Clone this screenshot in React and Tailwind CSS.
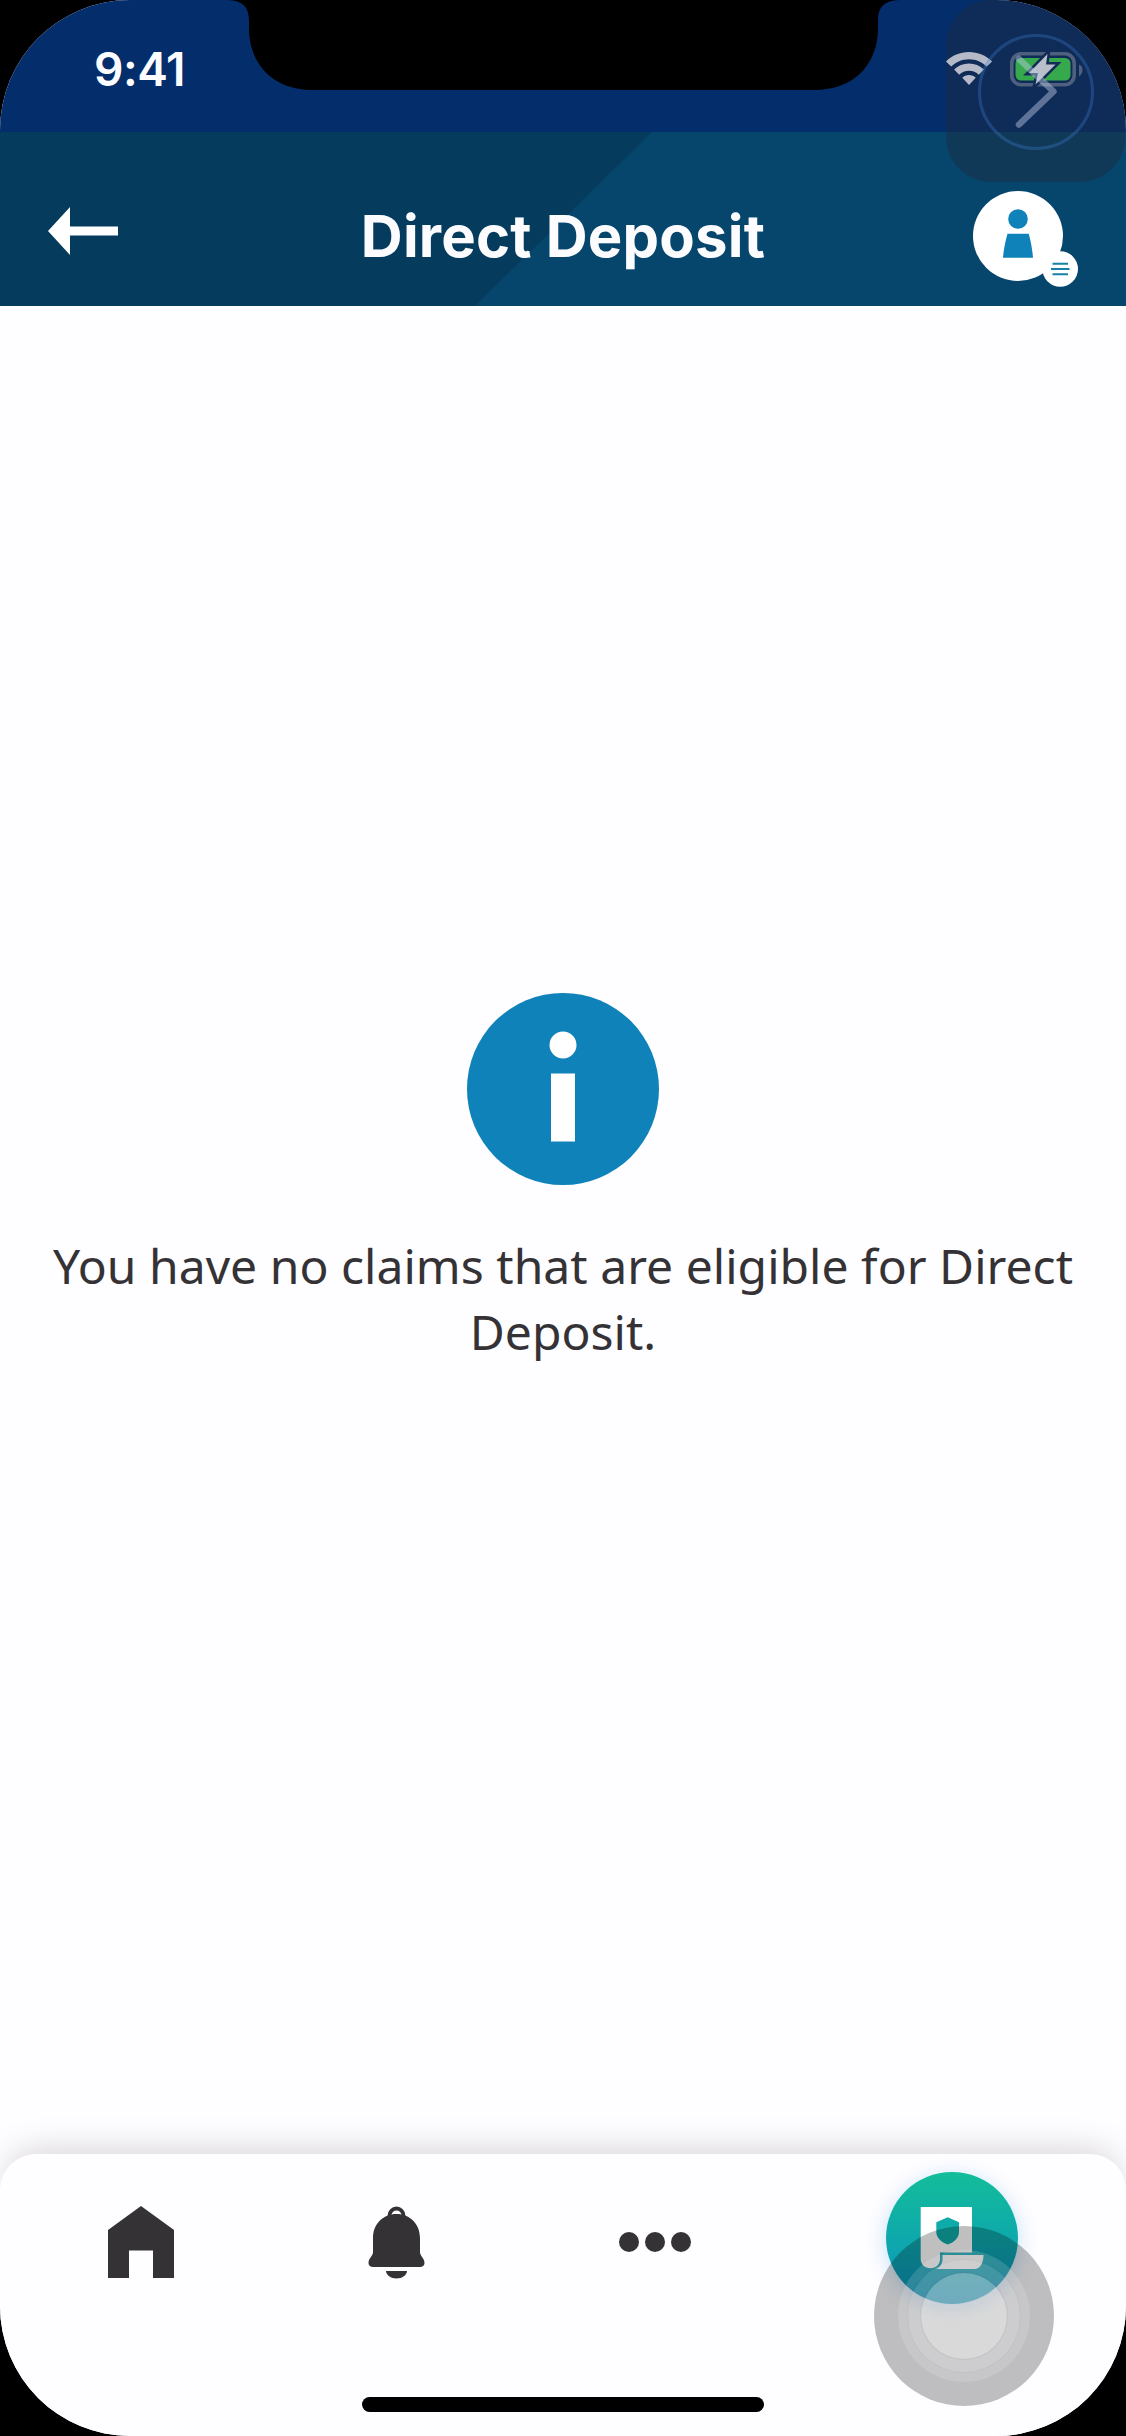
function Notch() {
  return (
    <svg className="absolute left-[228px] top-0" width="671" height="90" viewBox="0 0 671 90" fill="#000">
      <path d="M0 0C14 1 21 6 21 21V32C23 66 46 89 82 90H589C625 89 648 66 650 32V21C650 6 657 1 671 0Z" />
    </svg>
  );
}

function WifiIcon() {
  return (
    <svg width="46" height="34" viewBox="0 0 46 34" fill="#b5bac8">
      <path d="M23 0C32 0 40 3.5 46 9.5L40.8 14.6C36 10 30 7.3 23 7.3S10 10 5.2 14.6L0 9.5C6 3.500 14 0 23 0Z" />
      <path d="M23 11.600C28.800 11.600 34 13.800 37.900 17.600L32.800 22.700C30.200 20.200 26.800 18.700 23 18.700S15.800 20.200 13.200 22.700L8.100 17.600C12 13.800 17.200 11.600 23 11.600Z" />
      <path d="M23 23C25.600 23 28 24 29.700 25.700L23 33L16.300 25.700C18 24 20.400 23 23 23Z" />
    </svg>
  );
}

function BatteryIcon() {
  return (
    <svg width="74" height="38" viewBox="0 0 74 38">
      <rect x="1.800" y="3.800" width="62.400" height="31" rx="9.500" fill="none" stroke="#4f607f" strokeWidth="3.600" />
      <path d="M69 14.500C73 16 74.500 22 69 26.500Z" fill="#4f607f" />
      <rect x="5.500" y="8" width="55" height="22.500" rx="5.500" fill="#36a94c" />
      <path d="M37.500 4L19 23H28L25.500 34.500L45.500 14.500H36Z" fill="#b9c0c9" stroke="#122b57" strokeWidth="5" paintOrder="stroke" />
    </svg>
  );
}

function StatusBar() {
  return (
    <div className="flex h-[132px] items-start justify-between bg-[#042e6b] pl-[94px] pr-[42px]">
      <span className="mt-[42px] font-['Inter'] text-[46px] font-semibold leading-[54px] tracking-[-0.4px] text-[#fdfdff]">9:41</span>
      <div className="relative z-20 mt-[50px] flex items-start gap-[18px]">
        <div className="mt-[2px]">
          <WifiIcon />
        </div>
        <BatteryIcon />
      </div>
    </div>
  );
}

function Avatar() {
  return (
    <svg className="mt-[59px]" width="106" height="97" viewBox="0 0 106 97">
      <circle cx="45" cy="45" r="45" fill="#fff" />
      <circle cx="45" cy="28" r="9.800" fill="#0e82b9" />
      <path d="M34.500 42.700H55.700C57.800 50 59.300 58 60 66.700H30C30.700 58 32.400 50 34.500 42.700Z" fill="#0e82b9" />
      <circle cx="87.200" cy="78" r="17.800" fill="#fff" />
      <path d="M79.500 72.800H95M78 78H96.500M79.500 83.200H95" stroke="#1681a8" strokeWidth="1.900" />
    </svg>
  );
}

function Header() {
  return (
    <header className="grid h-[174px] grid-cols-[1fr_auto_1fr] items-start bg-[linear-gradient(135.5deg,#053b5d_50%,#06466d_50.1%)]">
      <svg className="ml-[48px] mt-[75px]" width="71" height="48" viewBox="0 0 71 48" fill="#fff">
        <path d="M0 24L22 0V19.500H70V28.500H22V48Z" />
      </svg>
      <h1 className="mt-[68px] font-['Inter'] text-[58px] font-[650] leading-[72px] tracking-[0.2px] text-[#fcfcff]">Direct Deposit</h1>
      <div className="flex justify-end pr-[47px]">
        <Avatar />
      </div>
    </header>
  );
}

function HomeIcon() {
  return (
    <svg className="mt-2" width="66" height="72" viewBox="0 0 66 72" fill="#353236">
      <path d="M33 0L66 24V72H45V44.500H21V72H0V24Z" />
    </svg>
  );
}

function BellIcon() {
  return (
    <svg className="mt-2" width="57" height="73" viewBox="0 0 57 73" fill="#353236">
      <path d="M21.500 12V9.500A7 7 0 0 1 35.500 9.500V12" fill="none" stroke="#353236" strokeWidth="3.800" />
      <path d="M28.500 8C42 8 52 18 52 32V46C52 50 56.500 52 56.500 57C56.500 59.500 54.500 61 52 61H5C2.500 61 .5 59.500 .5 57C.5 52 5 50 5 46V32C5 18 15 8 28.500 8Z" />
      <path d="M18 65H39C39 69 34 72.500 28.500 72.500S18 69 18 65Z" />
    </svg>
  );
}

function MoreIcon() {
  return (
    <div className="mr-px mt-2 flex gap-[6px]">
      <span className="size-5 rounded-full bg-[#353236]" />
      <span className="size-5 rounded-full bg-[#353236]" />
      <span className="size-5 rounded-full bg-[#353236]" />
    </div>
  );
}

function ClaimsButton() {
  return (
    <div className="size-[132px] rounded-full bg-[linear-gradient(180deg,#13bd99,#0a94c0)] shadow-[0_4px_20px_rgba(40,150,230,0.28)]">
      <svg width="132" height="132" viewBox="0 0 132 132">
        <path d="M34.700 35H86V80.500H54V87C54 92.500 50 96.300 44.500 96.300S34.700 92.500 34.700 87Z" fill="#fff" />
        <path d="M56.500 83H97.500C97.500 91 94 97 88.500 97H50C54.500 95 56.500 91.500 56.500 87Z" fill="#fff" />
        <path d="M61.700 45.300L73 50.300V60C73 65.500 68.500 70.500 61.700 72.500C55 70.500 50.300 65.500 50.300 60V50.300Z" fill="#0fabaa" />
      </svg>
    </div>
  );
}

function AssistiveOverlay() {
  return (
    <>
      <div className="absolute left-[946px] top-0 z-10 h-[182px] w-[179px] rounded-[45px] bg-[#20293c]/42" />
      <svg className="absolute left-[946px] top-0 z-30" width="180" height="182" viewBox="0 0 180 182" fill="none">
        <circle cx="90" cy="92" r="56.500" stroke="#3f7fd0" strokeOpacity=".32" strokeWidth="3.200" />
        <path d="M73 59L107.500 91.500L73 124.500" stroke="#bfcde6" strokeOpacity=".45" strokeWidth="6.500" strokeLinecap="round" strokeLinejoin="round" />
      </svg>
    </>
  );
}

function TouchIndicator() {
  return (
    <div className="absolute left-[874px] top-[2226px] flex size-[180px] items-center justify-center rounded-full bg-black/25">
      <div className="flex size-[132px] items-center justify-center rounded-full bg-white/15">
        <div className="flex size-[112px] items-center justify-center rounded-full bg-white/10 shadow-[0_0_2px_rgba(0,0,0,0.08)]">
          <div className="size-[86px] rounded-full bg-white/25 shadow-[0_0_2px_rgba(0,0,0,0.15)]" />
        </div>
      </div>
    </div>
  );
}

export default function App() {
  return (
    <div className="h-[2436px] w-[1126px] overflow-hidden bg-black">
      <div className="relative flex h-full flex-col overflow-hidden rounded-[130px] bg-[#fefdff]">
        <StatusBar />
        <Header />
        <main className="flex flex-1 flex-col items-center pt-[687px]">
          <svg width="192" height="192" viewBox="0 0 192 192">
            <circle cx="96" cy="96" r="96" fill="#0e82b9" />
            <circle cx="96" cy="52" r="13.500" fill="#fff" />
            <rect x="84" y="80.500" width="24" height="68" fill="#fff" />
          </svg>
          <p className="mt-[48px] px-[40px] text-center font-['Noto_Sans'] text-[48px] leading-[66px] tracking-[0.03px] text-[#353236]">
            You have no claims that are eligible for Direct Deposit.
          </p>
        </main>
        <nav className="flex h-[282px] flex-col items-center justify-between rounded-t-[36px] bg-[#fefdff] pb-[24px] pt-[18px] shadow-[0_-12px_34px_-8px_rgba(20,10,20,0.17)]">
          <div className="flex w-full items-center justify-between px-[108px]">
            <HomeIcon />
            <BellIcon />
            <MoreIcon />
            <ClaimsButton />
          </div>
          <div className="h-[15px] w-[402px] rounded-full bg-black" />
        </nav>
        <Notch />
        <AssistiveOverlay />
        <TouchIndicator />
      </div>
    </div>
  );
}
